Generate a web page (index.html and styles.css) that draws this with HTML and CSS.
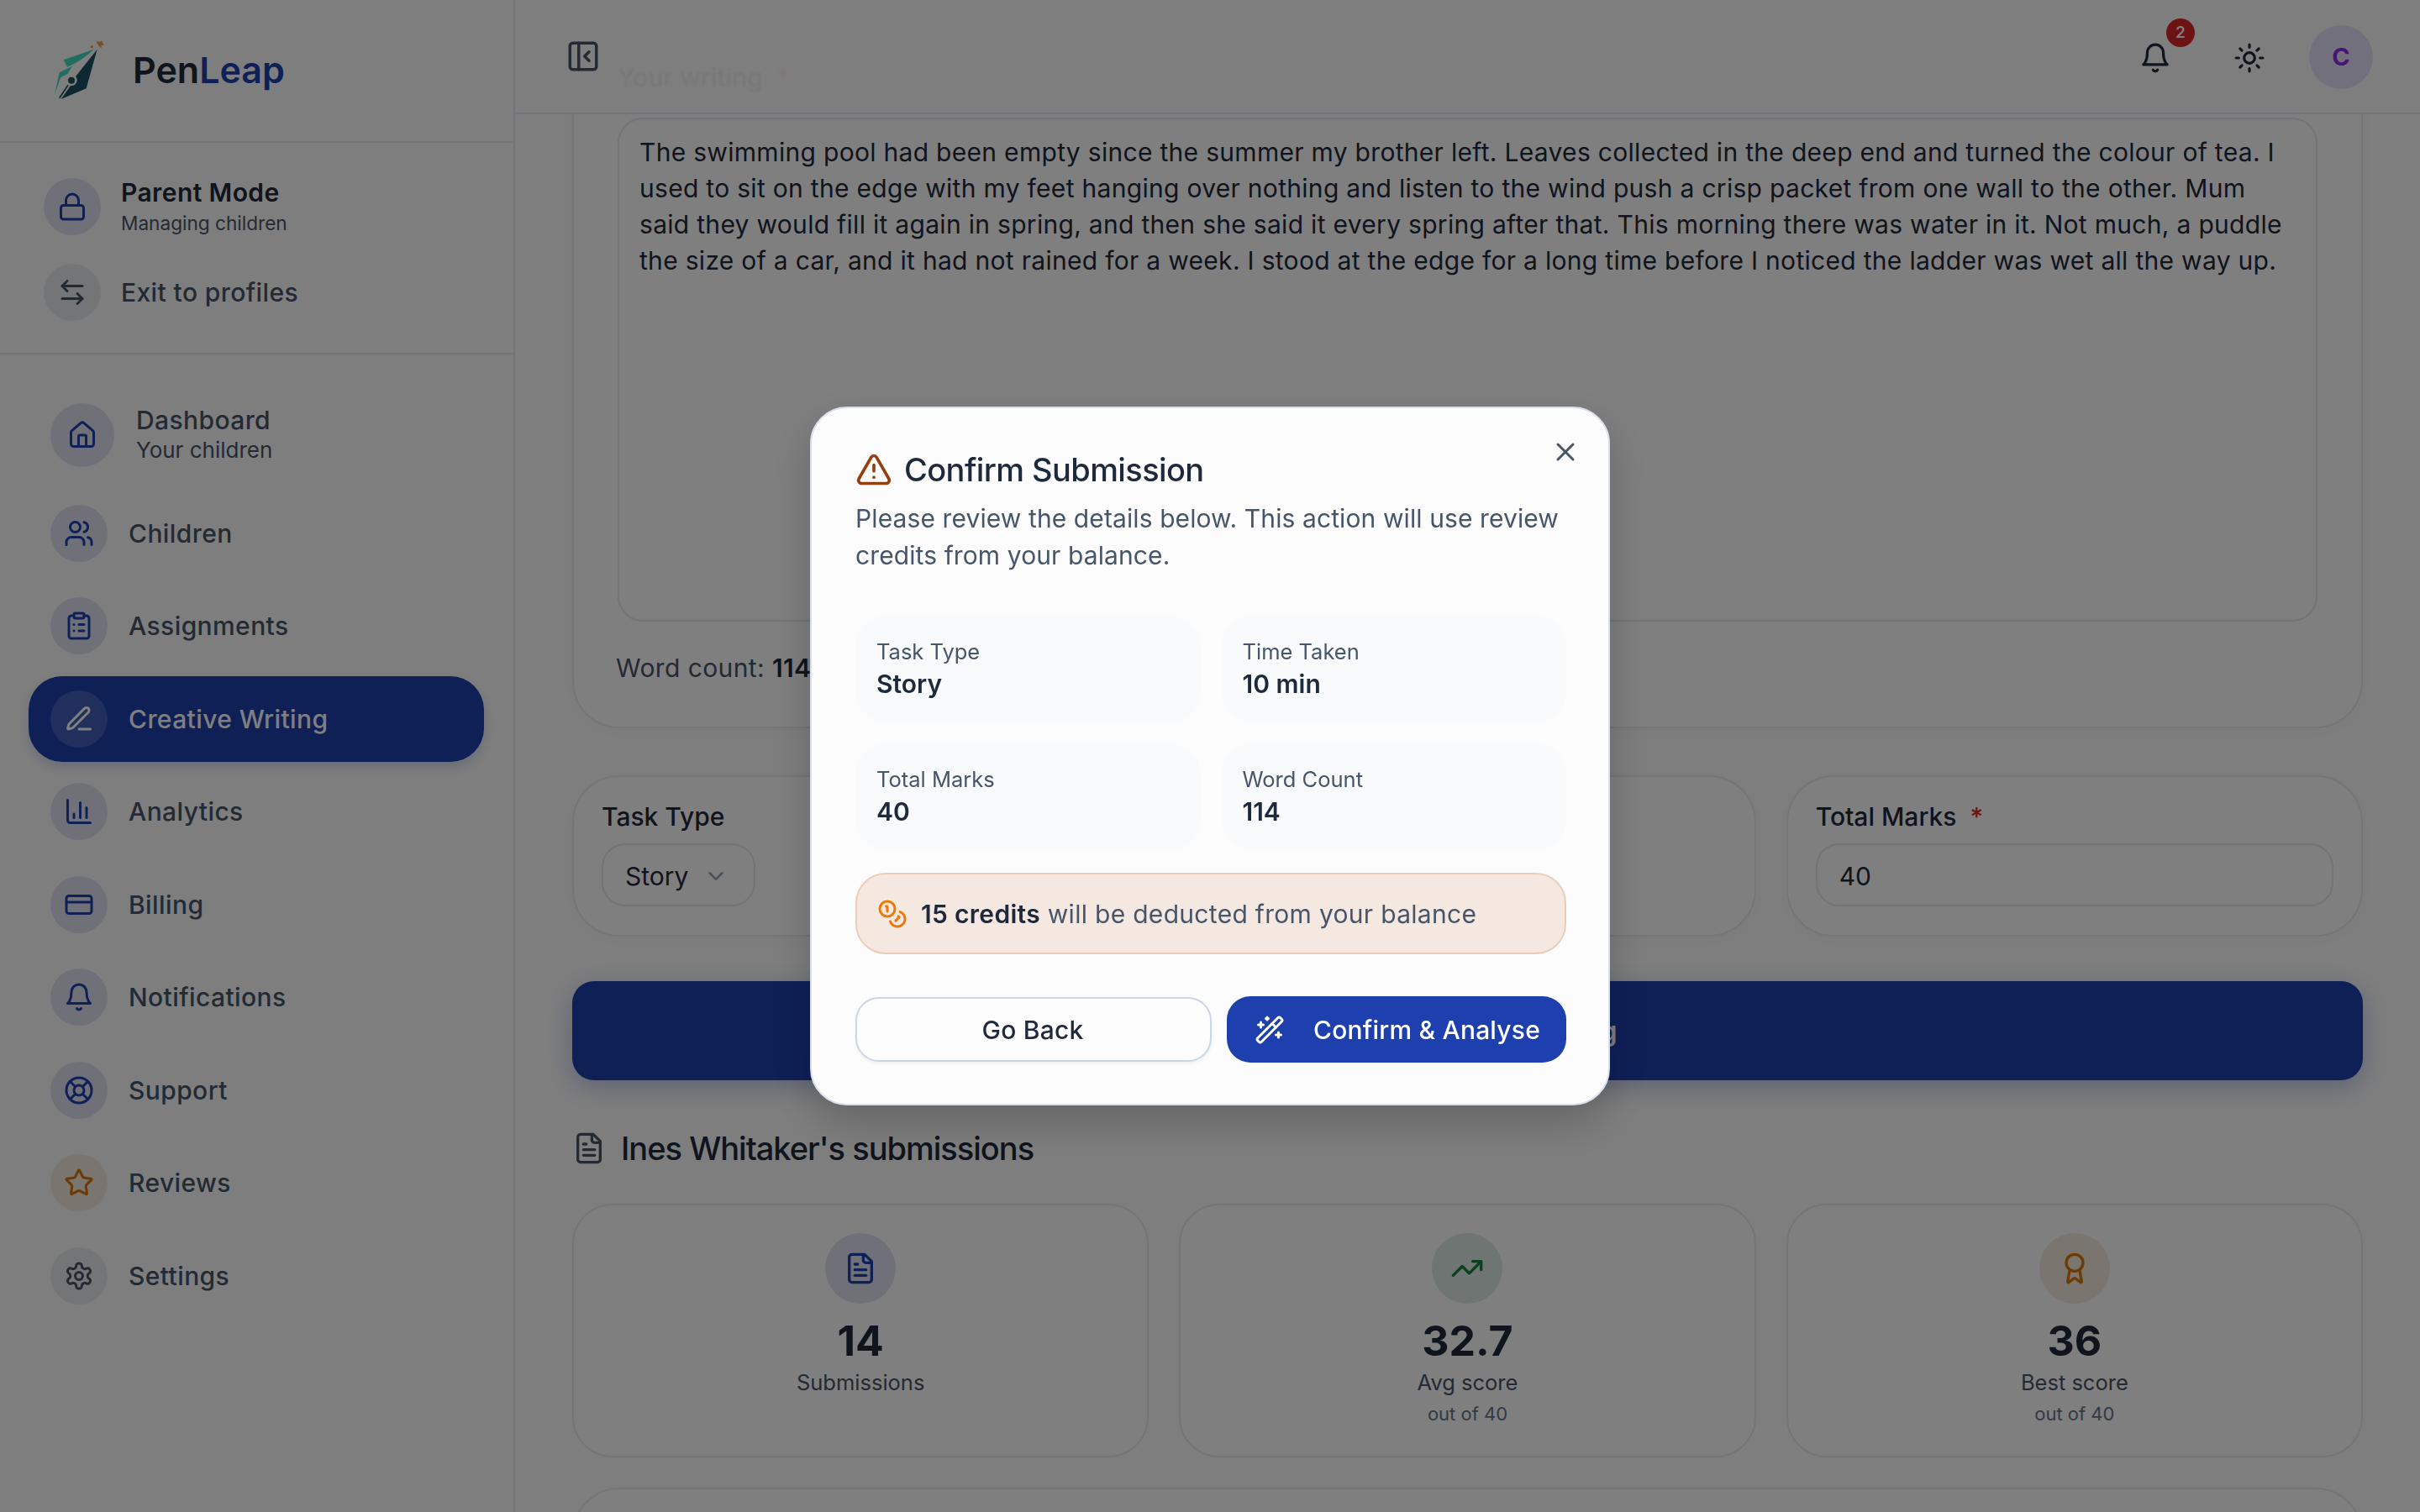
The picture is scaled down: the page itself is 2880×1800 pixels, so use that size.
FILE: index.html
```html
<!DOCTYPE html>
<html lang="en">
<head>
  <meta charset="UTF-8">
  <title>PenLeap - Creative Writing</title>
  <link rel="stylesheet" href="styles.css">
</head>
<body>

<svg class="sprite" aria-hidden="true">
  <symbol id="i-lock" viewBox="0 0 24 24"><rect x="3" y="11" width="18" height="11" rx="2"/><path d="M7 11V7a5 5 0 0 1 10 0v4"/></symbol>
  <symbol id="i-swap" viewBox="0 0 24 24"><path d="M8 3 4 7l4 4"/><path d="M4 7h16"/><path d="m16 21 4-4-4-4"/><path d="M20 17H4"/></symbol>
  <symbol id="i-house" viewBox="0 0 24 24"><path d="M15 21v-8a1 1 0 0 0-1-1h-4a1 1 0 0 0-1 1v8"/><path d="M3 10a2 2 0 0 1 .709-1.528l7-5.999a2 2 0 0 1 2.582 0l7 5.999A2 2 0 0 1 21 10v9a2 2 0 0 1-2 2H5a2 2 0 0 1-2-2z"/></symbol>
  <symbol id="i-users" viewBox="0 0 24 24"><path d="M16 21v-2a4 4 0 0 0-4-4H6a4 4 0 0 0-4 4v2"/><circle cx="9" cy="7" r="4"/><path d="M22 21v-2a4 4 0 0 0-3-3.87"/><path d="M16 3.13a4 4 0 0 1 0 7.75"/></symbol>
  <symbol id="i-clipboard" viewBox="0 0 24 24"><rect x="8" y="2" width="8" height="4" rx="1"/><path d="M16 4h2a2 2 0 0 1 2 2v14a2 2 0 0 1-2 2H6a2 2 0 0 1-2-2V6a2 2 0 0 1 2-2h2"/><path d="M12 11h4"/><path d="M12 16h4"/><path d="M8 11h.01"/><path d="M8 16h.01"/></symbol>
  <symbol id="i-pen" viewBox="0 0 24 24"><path d="M12 20h9"/><path d="M16.376 3.622a1 1 0 0 1 3.002 3.002L7.368 18.635a2 2 0 0 1-.855.506l-2.872.838a.5.5 0 0 1-.62-.62l.838-2.872a2 2 0 0 1 .506-.854z"/></symbol>
  <symbol id="i-chart" viewBox="0 0 24 24"><path d="M3 3v16a2 2 0 0 0 2 2h16"/><path d="M18 17V9"/><path d="M13 17V5"/><path d="M8 17v-3"/></symbol>
  <symbol id="i-card" viewBox="0 0 24 24"><rect x="2" y="5" width="20" height="14" rx="2"/><path d="M2 10h20"/></symbol>
  <symbol id="i-bell" viewBox="0 0 24 24"><path d="M6 8a6 6 0 0 1 12 0c0 7 3 9 3 9H3s3-2 3-9"/><path d="M10.3 21a1.94 1.94 0 0 0 3.4 0"/></symbol>
  <symbol id="i-buoy" viewBox="0 0 24 24"><circle cx="12" cy="12" r="10"/><path d="m4.93 4.93 4.24 4.24"/><path d="m14.83 9.17 4.24-4.24"/><path d="m14.83 14.83 4.24 4.24"/><path d="m9.17 14.83-4.24 4.24"/><circle cx="12" cy="12" r="4"/></symbol>
  <symbol id="i-star" viewBox="0 0 24 24"><path d="M11.525 2.295a.53.53 0 0 1 .95 0l2.31 4.679a2.123 2.123 0 0 0 1.595 1.16l5.166.756a.53.53 0 0 1 .294.904l-3.736 3.638a2.123 2.123 0 0 0-.611 1.878l.882 5.14a.53.53 0 0 1-.771.56l-4.618-2.428a2.122 2.122 0 0 0-1.973 0L6.396 21.01a.53.53 0 0 1-.77-.56l.881-5.139a2.122 2.122 0 0 0-.611-1.879L2.16 9.795a.53.53 0 0 1 .294-.906l5.165-.755a2.122 2.122 0 0 0 1.597-1.16z"/></symbol>
  <symbol id="i-gear" viewBox="0 0 24 24"><path d="M12.22 2h-.44a2 2 0 0 0-2 2v.18a2 2 0 0 1-1 1.73l-.43.25a2 2 0 0 1-2 0l-.15-.08a2 2 0 0 0-2.73.73l-.22.38a2 2 0 0 0 .73 2.73l.15.1a2 2 0 0 1 1 1.72v.51a2 2 0 0 1-1 1.74l-.15.09a2 2 0 0 0-.73 2.73l.22.38a2 2 0 0 0 2.73.73l.15-.08a2 2 0 0 1 2 0l.43.25a2 2 0 0 1 1 1.73V20a2 2 0 0 0 2 2h.44a2 2 0 0 0 2-2v-.18a2 2 0 0 1 1-1.73l.43-.25a2 2 0 0 1 2 0l.15.08a2 2 0 0 0 2.73-.73l.22-.39a2 2 0 0 0-.73-2.73l-.15-.08a2 2 0 0 1-1-1.74v-.5a2 2 0 0 1 1-1.74l.15-.09a2 2 0 0 0 .73-2.73l-.22-.38a2 2 0 0 0-2.73-.73l-.15.08a2 2 0 0 1-2 0l-.43-.25a2 2 0 0 1-1-1.73V4a2 2 0 0 0-2-2z"/><circle cx="12" cy="12" r="3"/></symbol>
  <symbol id="i-panel" viewBox="0 0 24 24"><rect x="3" y="3" width="18" height="18" rx="2"/><path d="M9 3v18"/><path d="m16 15-3-3 3-3"/></symbol>
  <symbol id="i-sun" viewBox="0 0 24 24"><circle cx="12" cy="12" r="4"/><path d="M12 2v2"/><path d="M12 20v2"/><path d="m4.93 4.93 1.41 1.41"/><path d="m17.66 17.66 1.41 1.41"/><path d="M2 12h2"/><path d="M20 12h2"/><path d="m6.34 17.66-1.41 1.41"/><path d="m19.07 4.93-1.41 1.41"/></symbol>
  <symbol id="i-alert" viewBox="0 0 24 24"><path d="m21.73 18-8-14a2 2 0 0 0-3.48 0l-8 14A2 2 0 0 0 4 21h16a2 2 0 0 0 1.73-3"/><path d="M12 9v4"/><path d="M12 17h.01"/></symbol>
  <symbol id="i-x" viewBox="0 0 24 24"><path d="M18 6 6 18"/><path d="m6 6 12 12"/></symbol>
  <symbol id="i-coins" viewBox="0 0 24 24"><circle cx="8" cy="8" r="6"/><path d="M18.09 10.37A6 6 0 1 1 10.34 18"/><path d="M7 6h1v4"/><path d="m16.71 13.88.7.71-2.82 2.82"/></symbol>
  <symbol id="i-wand" viewBox="0 0 24 24"><path d="m21.64 3.64-1.28-1.28a1.21 1.21 0 0 0-1.72 0L2.36 18.64a1.21 1.21 0 0 0 0 1.72l1.28 1.28a1.2 1.2 0 0 0 1.72 0L21.64 5.36a1.2 1.2 0 0 0 0-1.72"/><path d="m14 7 3 3"/><path d="M5 6v4"/><path d="M19 14v4"/><path d="M10 2v2"/><path d="M7 8H3"/><path d="M21 16h-4"/><path d="M11 3H9"/></symbol>
  <symbol id="i-file" viewBox="0 0 24 24"><path d="M15 2H6a2 2 0 0 0-2 2v16a2 2 0 0 0 2 2h12a2 2 0 0 0 2-2V7Z"/><path d="M14 2v4a2 2 0 0 0 2 2h4"/><path d="M10 9H8"/><path d="M16 13H8"/><path d="M16 17H8"/></symbol>
  <symbol id="i-trend" viewBox="0 0 24 24"><path d="M22 7 13.5 15.5 8.5 10.5 2 17"/><path d="M16 7h6v6"/></symbol>
  <symbol id="i-award" viewBox="0 0 24 24"><path d="m15.477 12.89 1.515 8.526a.5.5 0 0 1-.81.47l-3.58-2.687a1 1 0 0 0-1.197 0l-3.586 2.686a.5.5 0 0 1-.81-.469l1.514-8.526"/><circle cx="12" cy="8" r="6"/></symbol>
  <symbol id="i-chevron" viewBox="0 0 24 24"><path d="m6 9 6 6 6-6"/></symbol>
</svg>

<div class="app">
  <!-- sidebar -->
  <aside class="sidebar">
    <div class="brand">
      <svg class="brand-logo" viewBox="0 0 360 330">
        <path class="logo-teal" d="M245 92 137 130l13 25q50-20 95-63Z"/>
        <path class="logo-teal" d="M168 152 122 175l-17 79 22-62 24-12Z"/>
        <path class="logo-dark" d="M257 92 218 232l-90 38 34-48a20 20 0 0 0 18-33Z"/>
        <circle class="logo-dark" cx="165" cy="203" r="12"/>
        <path class="logo-slit" d="M153 220 122 266"/>
        <path class="logo-star" d="m252 62 14 4 8-6 2 10 6 5-9 3-2 10-8-7-5-9Z"/>
        <circle class="logo-star" cx="238" cy="83" r="5"/>
      </svg>
      <span class="brand-name">Pen<span class="brand-accent">Leap</span></span>
    </div>

    <div class="parent-box">
      <div class="parent-row">
        <span class="circle"><svg class="icon icon-blue"><use href="#i-lock"/></svg></span>
        <div>
          <div class="parent-title">Parent Mode</div>
          <div class="parent-sub">Managing children</div>
        </div>
      </div>
      <div class="parent-row">
        <span class="circle circle-gray"><svg class="icon icon-slate"><use href="#i-swap"/></svg></span>
        <div class="parent-exit">Exit to profiles</div>
      </div>
    </div>

    <nav class="nav">
      <a class="nav-item nav-tall">
        <span class="circle circle-big"><svg class="icon icon-blue"><use href="#i-house"/></svg></span>
        <span class="nav-text">Dashboard<small>Your children</small></span>
      </a>
      <a class="nav-item">
        <span class="circle"><svg class="icon icon-blue"><use href="#i-users"/></svg></span>
        <span class="nav-text">Children</span>
      </a>
      <a class="nav-item">
        <span class="circle"><svg class="icon icon-blue"><use href="#i-clipboard"/></svg></span>
        <span class="nav-text">Assignments</span>
      </a>
      <a class="nav-item active">
        <span class="circle"><svg class="icon"><use href="#i-pen"/></svg></span>
        <span class="nav-text">Creative Writing</span>
      </a>
      <a class="nav-item">
        <span class="circle"><svg class="icon icon-blue"><use href="#i-chart"/></svg></span>
        <span class="nav-text">Analytics</span>
      </a>
      <a class="nav-item">
        <span class="circle"><svg class="icon icon-blue"><use href="#i-card"/></svg></span>
        <span class="nav-text">Billing</span>
      </a>
      <a class="nav-item">
        <span class="circle"><svg class="icon icon-blue"><use href="#i-bell"/></svg></span>
        <span class="nav-text">Notifications</span>
      </a>
      <a class="nav-item">
        <span class="circle"><svg class="icon icon-blue"><use href="#i-buoy"/></svg></span>
        <span class="nav-text">Support</span>
      </a>
      <a class="nav-item">
        <span class="circle circle-amber"><svg class="icon icon-amber"><use href="#i-star"/></svg></span>
        <span class="nav-text">Reviews</span>
      </a>
      <a class="nav-item">
        <span class="circle circle-gray"><svg class="icon icon-slate"><use href="#i-gear"/></svg></span>
        <span class="nav-text">Settings</span>
      </a>
    </nav>
  </aside>

  <!-- main column -->
  <main class="main">
    <header class="topbar">
      <svg class="icon icon-panel"><use href="#i-panel"/></svg>
      <div class="topbar-right">
        <span class="bell">
          <svg class="icon icon-top"><use href="#i-bell"/></svg>
          <span class="badge">2</span>
        </span>
        <svg class="icon icon-top"><use href="#i-sun"/></svg>
        <span class="avatar">C</span>
      </div>
    </header>

    <div class="content">
      <section class="card writing-card">
        <div class="field-label">Your writing <span class="req">*</span></div>
        <div class="textarea">The swimming pool had been empty since the summer my brother left. Leaves collected in the deep end and turned the colour of tea. I<br>used to sit on the edge with my feet hanging over nothing and listen to the wind push a crisp packet from one wall to the other. Mum<br>said they would fill it again in spring, and then she said it every spring after that. This morning there was water in it. Not much, a puddle<br>the size of a car, and it had not rained for a week. I stood at the edge for a long time before I noticed the ladder was wet all the way up.</div>
        <div class="word-count">Word count: <b>114</b></div>
      </section>

      <section class="field-row">
        <div class="card field-card">
          <div class="field-label">Task Type</div>
          <div class="select">Story <svg class="icon icon-chevron"><use href="#i-chevron"/></svg></div>
        </div>
        <div class="card field-card"></div>
        <div class="card field-card">
          <div class="field-label">Total Marks <span class="req">*</span></div>
          <div class="input">40</div>
        </div>
      </section>

      <button class="submit-bar" type="button"><svg class="icon icon-submit"><use href="#i-wand"/></svg>Submit for Marking</button>

      <h2 class="section-title"><svg class="icon icon-title"><use href="#i-file"/></svg>Ines Whitaker's submissions</h2>

      <section class="stats">
        <div class="card stat">
          <span class="stat-icon"><svg class="icon icon-blue"><use href="#i-file"/></svg></span>
          <div class="stat-num">14</div>
          <div class="stat-label">Submissions</div>
        </div>
        <div class="card stat">
          <span class="stat-icon stat-green"><svg class="icon icon-green"><use href="#i-trend"/></svg></span>
          <div class="stat-num">32.7</div>
          <div class="stat-label">Avg score</div>
          <div class="stat-sub">out of 40</div>
        </div>
        <div class="card stat">
          <span class="stat-icon stat-amber"><svg class="icon icon-amber"><use href="#i-award"/></svg></span>
          <div class="stat-num">36</div>
          <div class="stat-label">Best score</div>
          <div class="stat-sub">out of 40</div>
        </div>
      </section>

      <section class="card next-card"></section>
    </div>
  </main>
</div>

<!-- confirm dialog -->
<div class="overlay">
  <div class="modal">
    <button class="modal-close" type="button"><svg class="icon"><use href="#i-x"/></svg></button>
    <h3 class="modal-title"><svg class="icon icon-alert"><use href="#i-alert"/></svg>Confirm Submission</h3>
    <p class="modal-desc">Please review the details below. This action will use review<br>credits from your balance.</p>

    <div class="tiles">
      <div class="tile"><div class="tile-label">Task Type</div><div class="tile-value">Story</div></div>
      <div class="tile"><div class="tile-label">Time Taken</div><div class="tile-value">10 min</div></div>
      <div class="tile"><div class="tile-label">Total Marks</div><div class="tile-value">40</div></div>
      <div class="tile"><div class="tile-label">Word Count</div><div class="tile-value">114</div></div>
    </div>

    <div class="credits">
      <svg class="icon icon-coins"><use href="#i-coins"/></svg>
      <span><b>15 credits</b> will be deducted from your balance</span>
    </div>

    <div class="modal-actions">
      <button class="btn btn-back" type="button">Go Back</button>
      <button class="btn btn-confirm" type="button"><svg class="icon icon-wand"><use href="#i-wand"/></svg>Confirm &amp; Analyse</button>
    </div>
  </div>
</div>

</body>
</html>
```

FILE: styles.css
```css
/* ----- base ----- */
* {
  box-sizing: border-box;
}
html, body {
  height: 100%;
}
body {
  margin: 0;
  overflow: hidden;
  background: #fdfdfd;
  color: #1e293b;
  font-family: Inter, "Noto Sans", sans-serif;
  font-size: 30px;
}
button {
  font-family: inherit;
  cursor: pointer;
}
.sprite {
  display: none;
}
.icon {
  display: block;
  width: 36px;
  height: 36px;
  fill: none;
  stroke: currentColor;
  stroke-width: 2;
  stroke-linecap: round;
  stroke-linejoin: round;
}
.icon-blue { color: #1e40af; }
.icon-slate { color: #475569; }
.icon-amber { color: #d97706; }
.icon-green { color: #15803d; }

.app {
  display: flex;
  height: 1800px;
}

/* ----- sidebar ----- */
.sidebar {
  flex: 0 0 613px;
  border-right: 2px solid #e2e8f0;
}
.brand {
  display: flex;
  align-items: center;
  height: 170px;
  padding: 0 0 2px 30px;
  border-bottom: 2px solid #e2e8f0;
}
.brand-logo {
  width: 120px;
  height: 110px;
  margin-right: 8px;
}
.logo-teal { fill: #3fdcc0; }
.logo-dark { fill: #1a5060; }
.logo-slit { stroke: #1a5060; stroke-width: 5; fill: none; }
.logo-star { fill: #f0a04c; }
.brand-name {
  font-size: 43px;
  font-weight: 600;
}
.brand-accent {
  color: #1e40af;
}

.parent-box {
  display: flex;
  flex-direction: column;
  gap: 34px;
  height: 252px;
  padding: 42px 0 0 52px;
  border-bottom: 2px solid #e2e8f0;
}
.parent-row {
  display: flex;
  align-items: center;
  gap: 24px;
}
.parent-title {
  font-size: 30px;
  font-weight: 600;
  line-height: 34px;
  letter-spacing: 0.4px;
}
.parent-sub {
  margin-top: 6px;
  font-size: 22.6px;
  line-height: 28px;
  color: #475569;
}
.parent-exit {
  font-size: 30px;
  font-weight: 500;
  letter-spacing: 0.4px;
  color: #475569;
}

.circle {
  display: flex;
  align-items: center;
  justify-content: center;
  flex: none;
  width: 68px;
  height: 68px;
  border-radius: 50%;
  background: #e0e3f0;
}
.circle-big {
  width: 76px;
  height: 76px;
}
.circle-gray { background: #e8ebef; }
.circle-amber { background: #f5eadf; }

.nav {
  display: flex;
  flex-direction: column;
  gap: 8.5px;
  padding: 39px 35px 0 34px;
}
.nav-item {
  display: flex;
  align-items: center;
  gap: 25px;
  height: 102px;
  padding-left: 26px;
  border-radius: 40px;
  font-size: 30px;
  font-weight: 500;
  letter-spacing: 0.4px;
  color: #475569;
}
.nav-tall {
  gap: 26px;
  height: 114px;
}
.nav-text small {
  display: block;
  font-size: 26px;
  font-weight: 400;
  letter-spacing: 0;
  line-height: 36px;
}
.nav-item.active {
  background: #1e40af;
  color: #fff;
  box-shadow: 0 6px 14px rgba(30, 64, 175, 0.2);
}
.nav-item.active .circle {
  background: rgba(255, 255, 255, 0.16);
}

/* ----- top bar, floats over the scrolled page ----- */
.main {
  position: relative;
  flex: 1;
  overflow: hidden;
}
.topbar {
  position: absolute;
  top: 0;
  left: 0;
  right: 0;
  z-index: 2;
  display: flex;
  align-items: center;
  justify-content: space-between;
  height: 136px;
  padding: 0 56px 0 60px;
  background: rgba(253, 253, 253, 0.94);
  backdrop-filter: blur(1px);
  border-bottom: 2px solid #e2e8f0;
}
.icon-panel {
  width: 42px;
  height: 42px;
  color: #475569;
}
.topbar-right {
  display: flex;
  align-items: center;
  gap: 74px;
}
.icon-top {
  width: 38px;
  height: 38px;
  margin-top: 4px;
  color: #1e293b;
}
.bell {
  position: relative;
}
.badge {
  position: absolute;
  top: -24px;
  left: 32px;
  width: 34px;
  height: 34px;
  border-radius: 50%;
  background: #dc2626;
  color: #fff;
  font-size: 19px;
  font-weight: 600;
  line-height: 34px;
  text-align: center;
}
.avatar {
  width: 76px;
  height: 76px;
  margin: 2px 0 0 -22px;
  border-radius: 50%;
  background: #e6e0fb;
  color: #8b2ce8;
  font-size: 29px;
  font-weight: 700;
  line-height: 76px;
  text-align: center;
}

/* ----- page content ----- */
.content {
  padding: 32px 68px 0 68px;
}
.card {
  background: #fefefe;
  border: 2px solid #e6ebf2;
  box-shadow: 0 4px 20px rgba(0, 0, 0, 0.03);
}
.writing-card {
  height: 835px;
  padding: 38px 52px 0;
  border-radius: 56px;
}
.field-label {
  font-size: 30px;
  font-weight: 500;
  line-height: 40px;
}
.req {
  margin-left: 8px;
  color: #dc2626;
}
.textarea {
  height: 600px;
  margin-top: 28px;
  padding: 18px 24px;
  border: 2px solid #e2e8f0;
  border-radius: 30px;
  letter-spacing: 0.3px;
  line-height: 43px;
  white-space: nowrap;
}
.word-count {
  margin: 35px 0 0 -2px;
  letter-spacing: 0.4px;
  line-height: 40px;
  color: #475569;
}
.word-count b {
  color: #1e293b;
  font-weight: 600;
}

.field-row {
  display: grid;
  grid-template-columns: repeat(3, 1fr);
  gap: 36px;
  margin-top: 56px;
}
.field-card {
  height: 192px;
  padding: 27px 33px 0;
  border-radius: 56px;
}
.select, .input {
  display: flex;
  align-items: center;
  height: 75px;
  margin-top: 12px;
  padding: 2px 26px 0;
  border: 2px solid #e2e8f0;
  border-radius: 28px;
}
.select {
  width: 183px;
  gap: 18px;
}
.icon-chevron {
  width: 30px;
  height: 30px;
  color: #94a3b8;
}

.submit-bar {
  display: flex;
  align-items: center;
  justify-content: center;
  gap: 24px;
  width: 100%;
  height: 118px;
  margin-top: 53px;
  border: 0;
  border-radius: 26px;
  background: #1e40af;
  color: #fff;
  font-size: 32px;
  font-weight: 600;
  box-shadow: 0 8px 30px rgba(30, 64, 175, 0.3);
}
.section-title {
  display: flex;
  align-items: center;
  gap: 18px;
  margin: 57px 0 42px;
  font-size: 38px;
  font-weight: 500;
  line-height: 48px;
  letter-spacing: -1px;
}
.icon-title {
  width: 40px;
  height: 40px;
  color: #475569;
}

.stats {
  display: grid;
  grid-template-columns: repeat(3, 1fr);
  gap: 36px;
}
.stat {
  display: flex;
  flex-direction: column;
  align-items: center;
  height: 302px;
  padding-top: 33px;
  border-radius: 48px;
  box-shadow: none;
}
.stat-icon {
  display: flex;
  align-items: center;
  justify-content: center;
  width: 84px;
  height: 84px;
  border-radius: 50%;
  background: #e0e3f0;
}
.stat-icon .icon {
  width: 40px;
  height: 40px;
}
.stat-green { background: #dfeae4; }
.stat-amber { background: #f5eadc; }
.stat-num {
  margin-top: 14px;
  font-size: 50px;
  font-weight: 700;
  line-height: 60px;
}
.stat-label {
  margin-top: 2px;
  font-size: 25.5px;
  line-height: 36px;
  color: #475569;
}
.stat-sub {
  margin-top: 4px;
  font-size: 22px;
  line-height: 30px;
  color: #64748b;
}
.next-card {
  height: 200px;
  margin-top: 36px;
  border-radius: 56px;
  box-shadow: none;
}

/* ----- confirm dialog ----- */
.overlay {
  position: fixed;
  inset: 0;
  z-index: 10;
  display: flex;
  align-items: center;
  justify-content: center;
  background: rgba(0, 0, 0, 0.5);
}
.modal {
  position: relative;
  width: 952px;
  padding: 49px 50px 49px 52px;
  border: 2px solid #d8e0ea;
  border-radius: 44px;
  background: #fcfcfd;
  box-shadow: 0 20px 50px rgba(0, 0, 0, 0.2);
}
.modal-close {
  position: absolute;
  top: 34px;
  right: 33px;
  padding: 0;
  border: 0;
  background: none;
  color: #475569;
}
.modal-title {
  display: flex;
  align-items: center;
  gap: 14px;
  margin: 0;
  font-size: 38px;
  font-weight: 500;
  line-height: 48px;
  letter-spacing: -0.6px;
}
.icon-alert {
  width: 44px;
  height: 44px;
  color: #92400e;
}
.modal-desc {
  margin: 12px 0 0;
  letter-spacing: 0.1px;
  line-height: 44px;
  color: #475569;
}
.tiles {
  display: grid;
  grid-template-columns: 1fr 1fr;
  gap: 25px;
  margin-top: 50px;
}
.tile {
  display: flex;
  flex-direction: column;
  justify-content: center;
  height: 127px;
  padding: 0 25px 4px;
  border-radius: 36px;
  background: #f8fafc;
}
.tile-label {
  font-size: 25.5px;
  line-height: 38px;
  color: #475569;
}
.tile-value {
  font-weight: 600;
  line-height: 38px;
}
.credits {
  display: flex;
  align-items: center;
  gap: 16px;
  height: 97px;
  margin-top: 27px;
  padding: 0 24px;
  border: 2px solid #eccdb8;
  border-radius: 36px;
  background: #f5e8e1;
  letter-spacing: 0.3px;
  color: #475569;
}
.credits b {
  color: #1e293b;
  font-weight: 600;
}
.icon-coins {
  color: #ea7a0a;
}
.modal-actions {
  display: flex;
  align-items: center;
  gap: 18px;
  margin-top: 50px;
}
.btn {
  display: flex;
  align-items: center;
  justify-content: center;
  height: 79px;
  border-radius: 28px;
  font-size: 30px;
  font-weight: 500;
  letter-spacing: 0.2px;
}
.btn-back {
  flex: 0 0 424px;
  height: 77px;
  padding-right: 8px;
  border: 2px solid #ccd6e3;
  background: #fdfdfe;
  color: #1e293b;
  box-shadow: 0 2px 4px rgba(0, 0, 0, 0.05);
}
.btn-confirm {
  flex: 1;
  gap: 34px;
  padding-right: 4px;
  border: 0;
  background: #1e40af;
  color: #fff;
}
```
